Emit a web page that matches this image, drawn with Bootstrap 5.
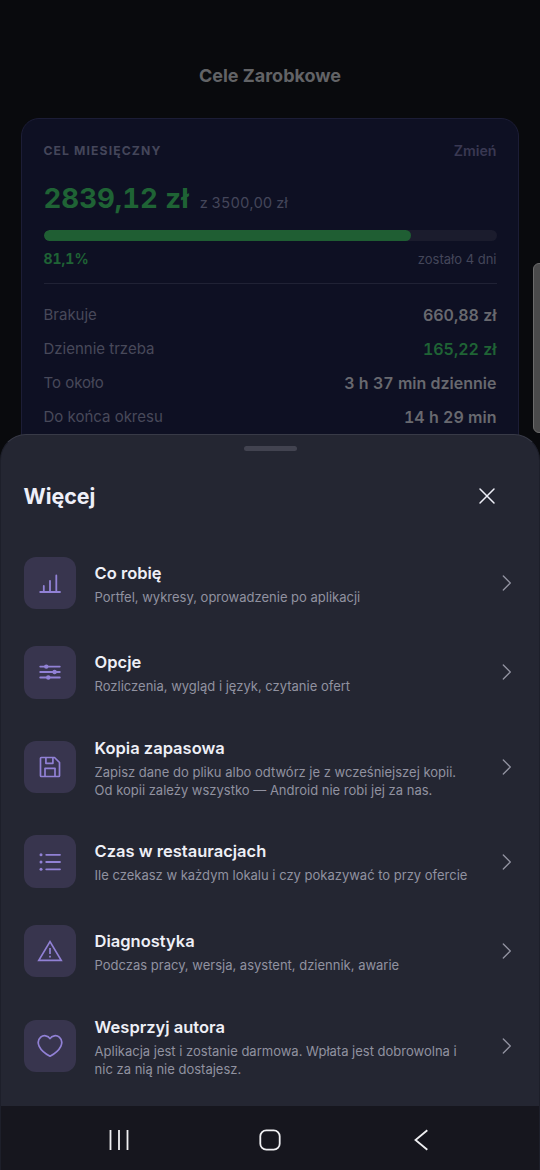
<!DOCTYPE html>
<html lang="pl" data-bs-theme="dark">
<head>
<meta charset="utf-8">
<meta name="viewport" content="width=device-width, initial-scale=1">
<title>Cele Zarobkowe</title>
<link href="https://cdn.jsdelivr.net/npm/bootstrap@5.3.0/dist/css/bootstrap.min.css" rel="stylesheet">
<style>
  body { font-family: Inter, "Liberation Sans", sans-serif; background: #090a0d; width: 540px; height: 1170px; overflow: hidden; font-size: 15px; line-height: 20px; }
  .page-title { font-size: 18px; line-height: 24px; font-weight: 700; color: #626366; padding-top: 64px; margin-bottom: 30px; }
  .goal-card { margin: 0 21px; height: 360px; border: 1.5px solid #1c1d36; border-radius: 18px; background: #0e1023; padding: 22px 21.5px 0; }
  .goal-label { font-size: 12.2px; font-weight: 700; letter-spacing: 1.1px; color: #44465a; }
  .goal-edit { font-size: 14.2px; font-weight: 600; color: #393852; }
  .goal-sum { font-size: 27.6px; line-height: 36px; font-weight: 700; color: #1f6335; margin-top: 18.5px; font-variant-numeric: tabular-nums; }
  .goal-of { font-size: 14.6px; font-weight: 400; color: #44465a; margin-left: 11px; }
  .goal-bar { height: 11px; border-radius: 6px; background: #1b1c2d; margin-top: 9px; }
  .goal-bar .progress-bar { background: #1f5e33; border-radius: 6px; }
  .goal-meta { font-size: 13px; line-height: 18px; margin-top: 9.5px; padding-bottom: 14.5px; border-bottom: 1px solid #202235; color: #44465a; }
  .goal-percent { font-size: 14px; font-weight: 700; font-variant-numeric: tabular-nums; }
  .stats { padding-top: 21px; }
  .stat-line { height: 34px; color: #48495a; }
  .stat-value { font-size: 16px; font-weight: 600; color: #68696f; font-variant-numeric: tabular-nums; }
  .text-gain, .stat-value.text-gain { color: #1f6335; }
  .edge-handle { position: absolute; right: -6px; top: 263px; width: 13px; height: 170px; border-radius: 6px; background: #4a4a4b; border: 1px solid #6b6b6b; }
  .sheet { position: absolute; left: 0; right: 0; top: 434px; bottom: 0; background: #242632; border: 1px solid #383a47; border-bottom: 0; border-left-color: #1d1f2a; border-right-color: #1d1f2a; border-radius: 26px 26px 0 0; overflow: hidden; }
  .grip { width: 53px; height: 5px; border-radius: 3px; background: #424350; margin: 11px auto 0; }
  .sheet-head { height: 87px; padding: 3px 43px 0 22.5px; color: #eeeff8; }
  .sheet-title { font-size: 21.4px; line-height: 28px; font-weight: 700; color: #eeeff8; }
  .menu-item { padding: 18.6px 24.5px 18.6px 22.6px; }
  .tile { width: 52.4px; height: 52.4px; border-radius: 12px; background: #38354e; color: #9181d5; }
  .stroke-icon { fill: none; stroke: currentColor; display: block; }
  .item-text { margin: 1px 0 -1px 18.6px; width: 395px; }
  .item-title { font-size: 16.5px; line-height: 22px; font-weight: 600; color: #eeeff6; margin-bottom: 4px; }
  .item-sub { font-size: 13px; line-height: 18.2px; color: #9192a0; white-space: nowrap; }
  .chev { color: #9394a2; }
  .system-nav { height: 64px; background: #16161e; color: #efeff2; padding: 3px 107px 0 107px; }
</style>
</head>
<body class="position-relative">
<main>
  <h1 class="page-title text-center">Cele Zarobkowe</h1>
  <section class="goal-card">
    <div class="d-flex justify-content-between align-items-center">
      <span class="goal-label">CEL MIESIĘCZNY</span><span class="goal-edit">Zmień</span>
    </div>
    <div class="d-flex align-items-baseline goal-sum"><span class="sum-now">2839,12 zł</span><span class="goal-of">z 3500,00 zł</span></div>
    <div class="progress goal-bar"><div class="progress-bar" style="width:81.1%"></div></div>
    <div class="goal-meta d-flex justify-content-between"><span class="text-gain goal-percent">81,1%</span><span class="days-left">zostało 4 dni</span></div>
    <div class="stats">
      <div class="stat-line d-flex justify-content-between"><span>Brakuje</span><span class="stat-value">660,88 zł</span></div>
      <div class="stat-line d-flex justify-content-between"><span>Dziennie trzeba</span><span class="stat-value text-gain">165,22 zł</span></div>
      <div class="stat-line d-flex justify-content-between"><span>To około</span><span class="stat-value">3 h 37 min dziennie</span></div>
      <div class="stat-line d-flex justify-content-between"><span>Do końca okresu</span><span class="stat-value">14 h 29 min</span></div>
    </div>
  </section>
</main>
<div class="edge-handle"></div>

<div class="sheet d-flex flex-column">
  <div class="grip flex-shrink-0"></div>
  <div class="sheet-head d-flex justify-content-between align-items-center flex-shrink-0">
    <h2 class="sheet-title mb-0">Więcej</h2>
    <svg class="stroke-icon" width="18" height="18" viewBox="0 0 18 18" stroke-width="1.5" stroke-linecap="round"><path d="M2 2 16 16M16 2 2 16"/></svg>
  </div>
  <div class="flex-grow-1 menu">
    <div class="menu-item d-flex align-items-center">
      <div class="tile d-flex align-items-center justify-content-center flex-shrink-0"><svg class="stroke-icon" width="26" height="26" viewBox="0 0 26 26" stroke-width="1.8" stroke-linecap="round"><path d="M3.2 22H23M6.8 22V16M13 22V10.8M19.3 22V5.5"/></svg></div>
      <div class="item-text"><div class="item-title">Co robię</div><div class="item-sub">Portfel, wykresy, oprowadzenie po aplikacji</div></div>
      <svg class="stroke-icon chev ms-auto" width="16" height="18" viewBox="0 0 16 18" stroke-width="1.3" stroke-linecap="round" stroke-linejoin="round"><path d="m4.3 2 7 7-7 7"/></svg>
    </div>
    <div class="menu-item d-flex align-items-center">
      <div class="tile d-flex align-items-center justify-content-center flex-shrink-0"><svg class="stroke-icon" width="26" height="26" viewBox="0 0 26 26" stroke-width="1.8" stroke-linecap="round"><path d="M3.2 7.6H22.8M3.2 13H22.8M3.2 18.5H22.8"/><g fill="currentColor" stroke="none"><circle cx="9.3" cy="7.6" r="2.2"/><circle cx="17.6" cy="13" r="2.2"/><circle cx="11.3" cy="18.5" r="2.2"/></g></svg></div>
      <div class="item-text"><div class="item-title">Opcje</div><div class="item-sub">Rozliczenia, wygląd i język, czytanie ofert</div></div>
      <svg class="stroke-icon chev ms-auto" width="16" height="18" viewBox="0 0 16 18" stroke-width="1.3" stroke-linecap="round" stroke-linejoin="round"><path d="m4.3 2 7 7-7 7"/></svg>
    </div>
    <div class="menu-item d-flex align-items-center">
      <div class="tile d-flex align-items-center justify-content-center flex-shrink-0"><svg class="stroke-icon" width="26" height="26" viewBox="0 0 26 26" stroke-width="1.7" stroke-linejoin="round"><path d="M3.5 4.3Q3.5 3.5 4.3 3.5H17.5L22.5 8.5V21.7Q22.5 22.5 21.7 22.5H4.3Q3.5 22.5 3.5 21.7ZM8.9 3.5V9.3H15.9V3.5M8 22.5V14.3H18V22.5"/></svg></div>
      <div class="item-text"><div class="item-title">Kopia zapasowa</div><div class="item-sub">Zapisz dane do pliku albo odtwórz je z wcześniejszej kopii.<br>Od kopii zależy wszystko — Android nie robi jej za nas.</div></div>
      <svg class="stroke-icon chev ms-auto" width="16" height="18" viewBox="0 0 16 18" stroke-width="1.3" stroke-linecap="round" stroke-linejoin="round"><path d="m4.3 2 7 7-7 7"/></svg>
    </div>
    <div class="menu-item d-flex align-items-center">
      <div class="tile d-flex align-items-center justify-content-center flex-shrink-0"><svg class="stroke-icon" width="26" height="26" viewBox="0 0 26 26" stroke-width="1.8" stroke-linecap="round"><path d="M9.2 5.8H23M9.2 13H23M9.2 20.3H23"/><g fill="currentColor" stroke="none"><circle cx="4" cy="5.8" r="1.5"/><circle cx="4" cy="13" r="1.5"/><circle cx="4" cy="20.3" r="1.5"/></g></svg></div>
      <div class="item-text"><div class="item-title">Czas w restauracjach</div><div class="item-sub">Ile czekasz w każdym lokalu i czy pokazywać to przy ofercie</div></div>
      <svg class="stroke-icon chev ms-auto" width="16" height="18" viewBox="0 0 16 18" stroke-width="1.3" stroke-linecap="round" stroke-linejoin="round"><path d="m4.3 2 7 7-7 7"/></svg>
    </div>
    <div class="menu-item d-flex align-items-center">
      <div class="tile d-flex align-items-center justify-content-center flex-shrink-0"><svg class="stroke-icon" width="26" height="26" viewBox="0 0 26 26" stroke-width="1.7"><path d="M13 3.6 24.2 22.4H1.8ZM13 10V16M13 17.7V19.6"/></svg></div>
      <div class="item-text"><div class="item-title">Diagnostyka</div><div class="item-sub">Podczas pracy, wersja, asystent, dziennik, awarie</div></div>
      <svg class="stroke-icon chev ms-auto" width="16" height="18" viewBox="0 0 16 18" stroke-width="1.3" stroke-linecap="round" stroke-linejoin="round"><path d="m4.3 2 7 7-7 7"/></svg>
    </div>
    <div class="menu-item d-flex align-items-center">
      <div class="tile d-flex align-items-center justify-content-center flex-shrink-0"><svg class="stroke-icon" width="26" height="26" viewBox="0 0 26 26" stroke-width="1.7" stroke-linejoin="round"><path d="M13 5.6C11 2.4 6.5 1.8 3.7 4.2C1.2 6.5 .6 10 2.2 13.3C4 17 9.200 21.200 13 23.200C16.800 21.200 22 17 23.800 13.300C25.400 10 24.800 6.500 22.300 4.200C19.500 1.800 15 2.400 13 5.600Z"/></svg></div>
      <div class="item-text"><div class="item-title">Wesprzyj autora</div><div class="item-sub">Aplikacja jest i zostanie darmowa. Wpłata jest dobrowolna i<br>nic za nią nie dostajesz.</div></div>
      <svg class="stroke-icon chev ms-auto" width="16" height="18" viewBox="0 0 16 18" stroke-width="1.3" stroke-linecap="round" stroke-linejoin="round"><path d="m4.3 2 7 7-7 7"/></svg>
    </div>
  </div>
  <div class="system-nav d-flex justify-content-between align-items-center flex-shrink-0">
    <svg class="stroke-icon" width="22" height="22" viewBox="0 0 22 22" stroke-width="1.8"><path d="M2.5 1V21M11 1V21M19.5 1V21"/></svg>
    <svg class="stroke-icon" width="22" height="22" viewBox="0 0 22 22" stroke-width="1.8"><rect x="1.3" y="1.3" width="19.4" height="19.4" rx="6"/></svg>
    <svg class="stroke-icon" width="22" height="22" viewBox="0 0 22 22" stroke-width="1.8"><path d="M17.3 1.2 5.5 11 17.3 20.8"/></svg>
  </div>
</div>
<script src="https://cdn.jsdelivr.net/npm/bootstrap@5.3.0/dist/js/bootstrap.bundle.min.js"></script>
</body>
</html>
